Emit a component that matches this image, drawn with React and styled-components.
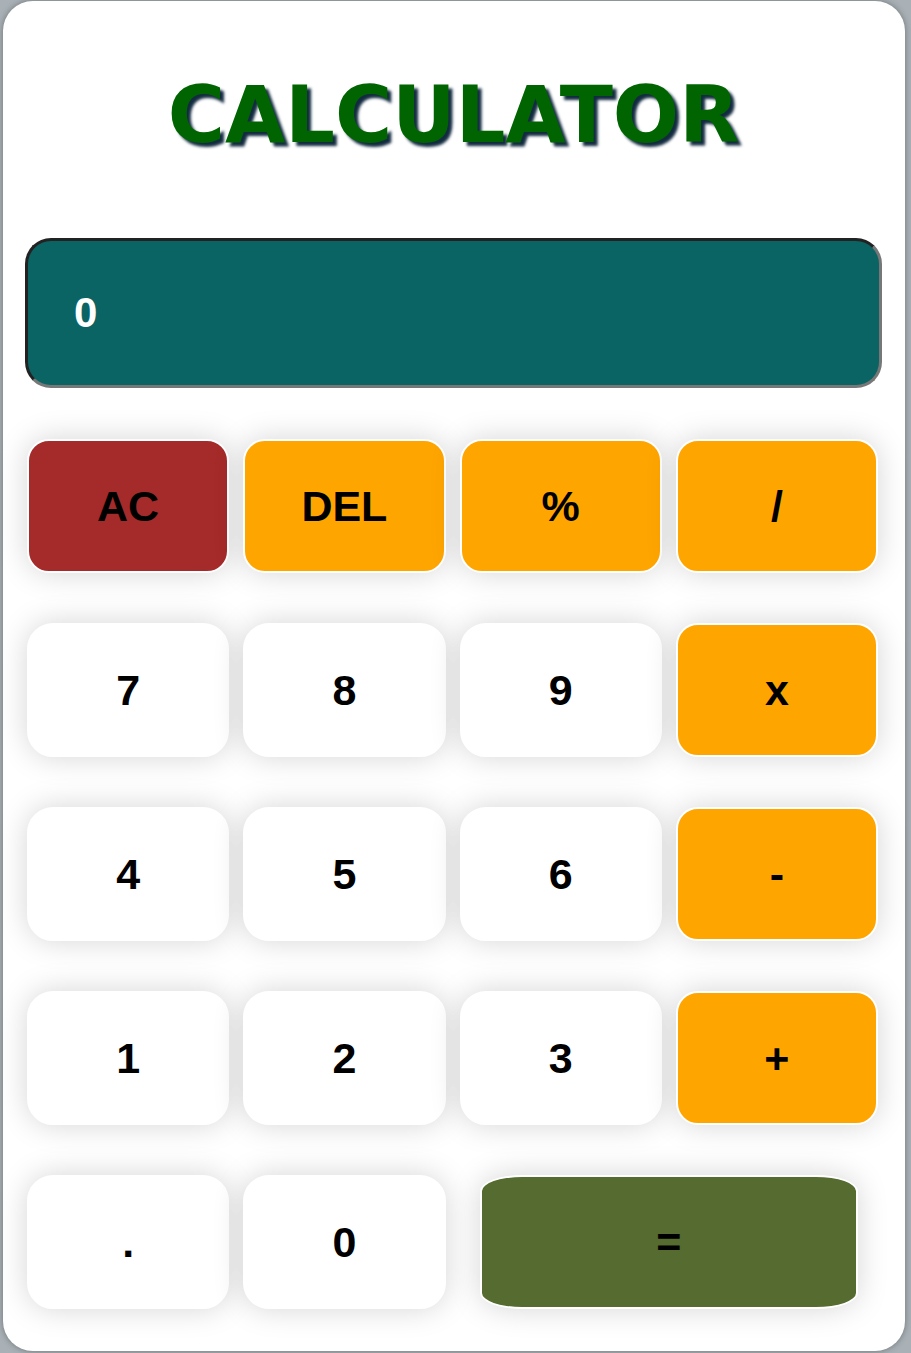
import React from "react";
import { useState } from "react";
import styled, { createGlobalStyle } from "styled-components";

const GlobalStyle = createGlobalStyle`
  html, body {
    margin: 0;
    padding: 0;
    background: #a9b1b6;
  }
  * {
    box-sizing: border-box;
  }
`;

const Page = styled.div`
  padding: 1px 6px 2px 3px;
`;

const Card = styled.div`
  background: #ffffff;
  border-radius: 30px;
  box-shadow: 0 0 6px rgba(0, 0, 0, 0.35);
  padding: 75px 23px 43px 22px;
  height: 1350px;
`;

const Title = styled.h1`
  margin: 0 0 84px;
  font-family: "DejaVu Sans", sans-serif;
  font-weight: bold;
  font-size: 78px;
  line-height: 78px;
  text-align: center;
  color: #006400;
  text-shadow: 4px 4px 3px #132b40;
`;

const Display = styled.div`
  height: 150px;
  display: flex;
  align-items: center;
  padding-left: 46px;
  background: #0b6464;
  border: 3px solid;
  border-color: #222 #777 #777 #222;
  border-radius: 26px;
  color: #ffffff;
  font-family: "Liberation Sans", Arial, sans-serif;
  font-weight: bold;
  font-size: 42px;
`;

const Keys = styled.div`
  display: grid;
  grid-template-columns: repeat(4, 1fr);
  grid-auto-rows: 134px;
  column-gap: 14px;
  row-gap: 50px;
  margin-top: 51px;
  padding: 0 4px 0 2px;
`;

const colors = {
  clear: "#a52a2a",
  op: "#ffa500",
  num: "#ffffff",
  equals: "#556b2f",
};

const Key = styled.button`
  display: flex;
  align-items: center;
  justify-content: center;
  background: ${(p) => colors[p.$kind]};
  border: 2px solid #ffffff;
  border-radius: ${(p) => (p.$kind === "num" ? "26px" : "22px")};
  box-shadow: 0 0 30px rgba(0, 0, 0, 0.17);
  color: #000000;
  font-family: "Liberation Sans", Arial, sans-serif;
  font-weight: bold;
  font-size: 43px;
  padding: 0;
  cursor: pointer;
`;

const EqualsKey = styled(Key)`
  grid-column: span 2;
  margin: 0 20px;
  border-radius: 42px / 16px;
`;

const rows = [
  [["AC", "clear"], ["DEL", "op"], ["%", "op"], ["/", "op"]],
  [["7", "num"], ["8", "num"], ["9", "num"], ["x", "op"]],
  [["4", "num"], ["5", "num"], ["6", "num"], ["-", "op"]],
  [["1", "num"], ["2", "num"], ["3", "num"], ["+", "op"]],
  [[".", "num"], ["0", "num"]],
];

function App() {
  const [value] = useState("0");

  return (
    <Page>
      <GlobalStyle />
      <Card>
        <Title>CALCULATOR</Title>
        <Display>{value}</Display>
        <Keys>
          {rows.flat().map(([label, kind]) => (
            <Key key={label} $kind={kind}>
              {label}
            </Key>
          ))}
          <EqualsKey $kind="equals">=</EqualsKey>
        </Keys>
      </Card>
    </Page>
  );
}

export default App;
